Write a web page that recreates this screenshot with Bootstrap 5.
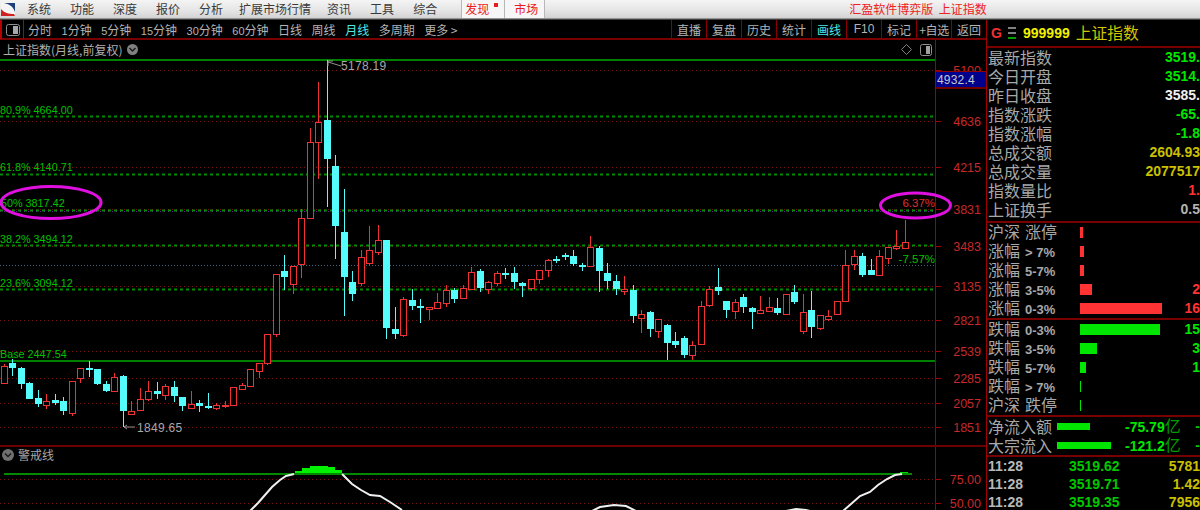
<!DOCTYPE html>
<html lang="zh-CN">
<head>
    <meta charset="UTF-8">
    <title>汇盈软件博弈版 上证指数</title>
    <link href="https://cdn.jsdelivr.net/npm/bootstrap@5.3.0/dist/css/bootstrap.min.css" rel="stylesheet">
    <style>
        html, body { background: #000; margin: 0; height: 510px; overflow: hidden; }
        body, svg text { font-family: "Liberation Sans", "Noto Sans CJK SC", sans-serif; }
        .cjk { font-family: "Noto Sans CJK SC", sans-serif; }

        .menu-bar { height: 20px; font-size: 12px; line-height: 18px; color: #3a3a3a;
            background: linear-gradient(#f4f4f4 0, #e6e6e6 50%, #d4d4d4 88%, #707070 95%, #101010 100%); }
        .menu-logo { width: 27px; }
        .menu-item { margin-right: 19px; }
        .menu-item.tight { margin-right: 16px; }
        .menu-tab { color: #e81c1c; background: #f6f6f6; border-left: 1px solid #b8b8b8; height: 18px; }
        .tab-find { width: 43px; margin-left: 1px; padding-left: 3px; position: relative; }
        .tab-find i { position: absolute; left: 32px; top: 3px; width: 4px; height: 4px; background: #e81c1c; }
        .tab-market { width: 41px; padding-left: 9px; border-right: 1px solid #b8b8b8; }
        .app-title { color: #ee2222; margin-left: 304px; white-space: pre; word-spacing: 3px; }

        .chart-side { width: 986px; }
        .tool-bar { height: 20px; font-size: 12px; line-height: 19px; color: #b4b4b4; border-bottom: 2px solid #7a0000; }
        .tool-box { width: 24px; height: 19px; border-left: 2px solid #b80000; border-right: 1px solid #b80000; }
        .tool-periods { gap: 9.5px; margin-left: 4px; }
        .tool-num { font-size: 11px; }
        .tool-on { color: #4ce8e8; }
        .tool-cell { width: 35px; height: 18px; border-left: 1px solid #8a0000; text-align: center; }
        .tool-wide { font-size: 12px; letter-spacing: -.4px; }

        .sub-bar { height: 19px; font-size: 12px; line-height: 19px; color: #b0b0b0; padding-left: 3px; }
        .sub-arrow { margin-left: 5px; }
        .sub-axis { width: 51px; height: 19px; margin-left: 3px; border-left: 1px solid #a00000; }
        .chart-svg { display: block; }

        .quote-side { width: 214px; border-left: 1px solid #a00000; overflow: hidden; height: 490px; }
        .quote-head { height: 28px; border-bottom: 2px solid #7a0000; padding-left: 4px; line-height: 26px; }
        .q-g { color: #f03030; font-weight: bold; font-size: 14px; width: 17px; }
        .q-code { color: #f0f000; font-weight: bold; font-size: 14px; margin-left: 7px; }
        .q-name { color: #d0c800; font-size: 15.75px; margin-left: 6px; }
        .q-rows { border-bottom: 2px solid #7a0000; padding-bottom: 2px; }
        .q-row { height: 19px; line-height: 19px; padding-left: 1px; font-weight: bold; font-size: 14px; white-space: nowrap; }
        .q-label { font-weight: normal; font-size: 16px; color: #a8a8a8; }
        .q-mini { font-weight: bold; font-size: 13px; color: #a8a8a8; margin-left: 5px; }
        .q-gap { margin-left: 5px; }
        .q-bar-cell { width: 92px; flex: none; }
        .q-bar { height: 11px; }
        .q-bar.up { background: #ff3333; }
        .q-bar.dn { background: #00e600; }
        .q-flow-cell { width: 69px; flex: none; }
        .q-flow { width: 68px; flex: none; }
        .q-flow .q-bar { height: 7px; }
        .q-sep { border-bottom: 2px solid #7a0000; }
        .q-yi { font-weight: normal; font-size: 16px; color: #00a000; }
        .q-green { color: #00e600; }
        .q-dgreen { color: #00c800; }
        .q-white { color: #f0f0f0; }
        .q-gray { color: #b4b4b4; }
        .q-olive { color: #c8c000; }
        .q-red { color: #ff3333; }
        .tape-row { height: 18px; line-height: 18px; padding-left: 1px; font-weight: bold; font-size: 14px; white-space: nowrap; }
        .tape-time { width: 81px; flex: none; color: #b8b8b8; }
    </style>
</head>
<body>
    <div class="menu-bar d-flex">
        <div class="menu-logo flex-shrink-0">
            <svg width="16" height="14" viewBox="0 0 16 14">
                <rect x="1" width="14" height="13" fill="#f4f4f4"/>
                <path d="M4 0h11v9C13 3 9 1 4 0z" fill="#1c3f7c"/>
                <path d="M1 6c3 4 8 5 13 5l1 2H1z" fill="#d02020"/>
            </svg>
        </div>
        <span class="menu-item cjk">系统</span>
        <span class="menu-item cjk">功能</span>
        <span class="menu-item cjk">深度</span>
        <span class="menu-item cjk">报价</span>
        <span class="menu-item tight cjk">分析</span>
        <span class="menu-item tight cjk">扩展市场行情</span>
        <span class="menu-item cjk">资讯</span>
        <span class="menu-item cjk">工具</span>
        <span class="cjk">综合</span>
        <span class="menu-tab tab-find cjk ms-4">发现<i></i></span>
        <span class="menu-tab tab-market cjk">市场</span>
        <span class="app-title cjk">汇盈软件博弈版 上证指数</span>
    </div>

    <div class="d-flex">
        <div class="chart-side flex-shrink-0">
            <div class="tool-bar d-flex">
                <div class="tool-box d-flex align-items-center justify-content-center">
                    <svg width="14" height="12" viewBox="0 0 14 12">
                        <rect x=".5" y=".5" width="13" height="11" rx="2" fill="none" stroke="#909090"/>
                        <rect x="7" y="2" width="5" height="8" fill="#a8a8a8"/>
                    </svg>
                </div>
                <div class="tool-periods d-flex">
                    <span class="cjk">分时</span>
                    <span><span class="tool-num">1</span><span class="cjk">分钟</span></span>
                    <span><span class="tool-num">5</span><span class="cjk">分钟</span></span>
                    <span><span class="tool-num">15</span><span class="cjk">分钟</span></span>
                    <span><span class="tool-num">30</span><span class="cjk">分钟</span></span>
                    <span><span class="tool-num">60</span><span class="cjk">分钟</span></span>
                    <span class="cjk">日线</span>
                    <span class="cjk">周线</span>
                    <span class="cjk tool-on">月线</span>
                    <span class="cjk">多周期</span>
                    <span class="cjk">更多 &gt;</span>
                </div>
                <div class="d-flex ms-auto">
                    <span class="tool-cell cjk">直播</span>
                    <span class="tool-cell cjk">复盘</span>
                    <span class="tool-cell cjk">历史</span>
                    <span class="tool-cell cjk">统计</span>
                    <span class="tool-cell cjk tool-on">画线</span>
                    <span class="tool-cell">F10</span>
                    <span class="tool-cell cjk">标记</span>
                    <span class="tool-cell cjk tool-wide">+自选</span>
                    <span class="tool-cell cjk">返回</span>
                </div>
            </div>
            <div class="sub-bar d-flex">
                <span class="cjk">上证指数(月线,前复权)</span>
                <span class="sub-arrow d-flex align-items-center">
                    <svg width="11" height="11" viewBox="0 0 11 11">
                        <circle cx="5.5" cy="5.5" r="5.5" fill="#808080"/>
                        <path d="M2.5 4l3 3 3-3" fill="none" stroke="#1a1a1a" stroke-width="1.5"/>
                    </svg>
                </span>
                <span class="d-flex align-items-center gap-2 ms-auto">
                    <svg width="11" height="11" viewBox="0 0 11 11"><path d="M5.5 .5l5 5-5 5-5-5z" fill="none" stroke="#808080"/></svg>
                    <svg width="12" height="12" viewBox="0 0 12 12">
                        <rect x=".5" y=".5" width="11" height="11" rx="2" fill="none" stroke="#909090"/>
                        <rect x="6" y="2" width="4" height="8" fill="#a0a0a0"/>
                    </svg>
                </span>
                <span class="sub-axis"></span>
            </div>
            <svg id="chart" class="chart-svg" width="986" height="451" viewBox="0 59 986 451"></svg>
        </div>

        <div class="quote-side flex-shrink-0">
            <div class="quote-head d-flex align-items-center">
                <span class="q-g">G</span>
                <svg width="8" height="14" viewBox="0 0 8 14">
                    <rect y="1" width="8" height="2" fill="#808080"/>
                    <rect y="6" width="8" height="2" fill="#808080"/>
                    <rect y="11" width="8" height="2" fill="#00a000"/>
                </svg>
                <span class="q-code">999999</span>
                <span class="q-name cjk">上证指数</span>
            </div>
            <div class="q-rows" id="summary"></div>
            <div class="q-sep" id="ups"></div>
            <div class="q-sep pb-0" id="downs"></div>
            <div class="q-sep" id="flows"></div>
            <div id="tape"></div>
        </div>
    </div>

    <script src="https://cdn.jsdelivr.net/npm/bootstrap@5.3.0/dist/js/bootstrap.bundle.min.js"></script>
    <script>
        // [type, wick top, body top, body bottom, wick bottom], type 1 = red hollow, 0 = cyan filled
        const candles = [
            [1,364,366,383,383],[0,359,363,368,376],[0,367,368,384,389],[0,382,383,399,399],[0,390,398,404,407],
            [1,394,401,405,409],[0,394,400,403,405],[0,397,401,411,415],[1,381,381,413,416],[1,368,368,378,383],
            [0,361,368,370,377],[0,369,369,384,385],[0,381,384,391,392],[1,373,377,391,391],[0,375,376,411,427],
            [1,401,411,414,415],[1,388,399,410,410],[1,381,391,399,401],[0,382,391,394,399],[1,384,386,395,400],
            [0,381,387,396,402],[0,397,397,406,411],[1,391,404,408,408],[0,400,403,406,412],[0,393,406,408,409],
            [1,403,405,408,410],[1,401,405,406,408],[1,387,387,405,406],[1,383,385,389,389],[1,369,369,386,386],
            [1,363,363,371,378],[1,334,334,363,365],[1,274,274,334,337],[0,255,271,277,290],[1,266,266,284,294],
            [1,209,218,264,278],[1,128,142,218,218],[1,82,122,142,179],[0,60,120,159,207],[0,155,166,226,259],
            [0,189,232,277,316],[0,271,282,294,301],[1,250,257,283,286],[1,226,250,263,266],[1,225,240,252,255],
            [0,240,240,328,339],[0,307,329,334,339],[1,297,299,335,337],[0,289,300,306,310],[0,299,306,308,323],
            [1,307,307,309,320],[1,293,302,308,308],[1,285,290,303,307],[0,288,290,299,303],[1,285,288,298,298],
            [1,267,272,289,289],[0,269,271,288,292],[1,281,282,289,294],[1,271,273,283,286],[0,268,273,275,279],
            [0,267,273,282,289],[0,282,283,286,297],[1,279,279,288,291],[1,270,270,279,284],[1,259,260,270,277],
            [0,256,259,261,263],[0,253,255,256,260],[0,250,256,264,266],[0,263,265,266,271],[1,236,247,266,266],
            [0,246,248,271,292],[0,263,273,281,289],[0,275,281,289,295],[1,276,289,291,295],[0,285,290,316,323],
            [1,310,314,318,333],[0,311,312,329,337],[1,319,319,331,338],[0,324,325,343,360],[0,332,341,345,348],
            [0,336,338,355,358],[1,341,345,355,360],[1,301,306,344,344],[1,286,289,305,307],[0,268,287,291,295],
            [0,301,301,310,318],[1,299,302,311,319],[0,294,297,307,313],[0,307,308,312,329],[1,296,310,313,313],
            [1,297,307,311,311],[0,298,308,313,315],[1,294,294,314,315],[0,285,292,302,304],[1,294,312,331,334],
            [0,291,310,327,338],[1,315,315,328,330],[1,310,316,319,321],[1,301,301,314,314],[1,250,265,301,301],
            [1,250,256,264,270],[0,253,256,275,277],[0,259,270,275,275],[1,250,256,275,276],[1,247,247,258,264],
            [1,230,246,248,250],[1,220,242,248,248]
        ];
        const axisRight = 935;
        let svg = '';

        // dotted grid and axis labels
        const gridY = [[70,'5100'],[121,'4636'],[167,'4215'],[209,'3831'],[246,'3483'],[286,'3135'],[320,'2821'],[351,'2539'],[378,'2285'],[403,'2057'],[427,'1851'],[479,'75.00'],[503,'50.00']];
        for (const [y, label] of gridY) {
            svg += `<line x1="0" x2="${axisRight}" y1="${y+.5}" y2="${y+.5}" stroke="#7c1010" stroke-dasharray="1 3"/>`;
            svg += `<rect x="936" y="${y}" width="5" height="1" fill="#a00000"/>`;
            svg += `<text x="981" y="${y+5}" text-anchor="end" font-size="12.5" fill="#c82828">${label}</text>`;
        }
        svg += `<line x1="0" x2="${axisRight}" y1="211.5" y2="211.5" stroke="#7a10a0" stroke-dasharray="1 3"/>`;
        svg += `<line x1="0" x2="${axisRight}" y1="265.5" y2="265.5" stroke="#3c6488" stroke-dasharray="1 2"/>`;

        // fibonacci levels
        for (const y of [116, 174, 210, 245, 289]) {
            svg += `<line x1="0" x2="${axisRight}" y1="${y+.5}" y2="${y+.5}" stroke="#008c00" stroke-width="2" stroke-dasharray="3 3"/>`;
        }
        svg += `<rect x="0" y="59" width="${axisRight}" height="2" fill="#008000"/>`;
        svg += `<rect x="0" y="360" width="${axisRight}" height="2" fill="#008000"/>`;
        const fibLabels = [[0,114,'80.9% 4664.00'],[0,171,'61.8% 4140.71'],[1,207,'50% 3817.42'],[0,243,'38.2% 3494.12'],[0,287,'23.6% 3094.12'],[0,358,'Base 2447.54']];
        for (const [x, y, t] of fibLabels) {
            svg += `<text x="${x}" y="${y}" font-size="10.8" fill="#00c000">${t}</text>`;
        }

        // candles
        candles.forEach(([up, top, bt, bb, bottom], i) => {
            const cx = Math.floor(4.4 + 8.5 * i) + .5;
            const color = up ? '#f03232' : '#54fcfc';
            let g = `<line x1="${cx}" x2="${cx}" y1="${top}" y2="${bottom}" stroke="${color}"/>`;
            if (up) {
                g += `<rect x="${cx-3}" y="${bt+.5}" width="6" height="${Math.max(bb-bt,1)}" fill="#000" stroke="${color}"/>`;
            } else {
                g += `<rect x="${cx-3.5}" y="${bt}" width="7" height="${Math.max(bb-bt,2)}" fill="${color}"/>`;
            }
            svg += g;
        });

        // high / low markers
        svg += `<path d="M328 62l13 4" stroke="#909090" fill="none"/><path d="M328 61v5M328 61h5" stroke="#909090" fill="none"/>`;
        svg += `<text x="341" y="70" font-size="12" letter-spacing=".3" fill="#a8a8a8">5178.19</text>`;
        svg += `<path d="M124 427h11M124 427l3-2M124 427l3 2" stroke="#909090" fill="none"/>`;
        svg += `<text x="137" y="432" font-size="12" letter-spacing=".3" fill="#a8a8a8">1849.65</text>`;
        svg += `<text x="935" y="207" text-anchor="end" font-size="11.5" fill="#e02c2c">6.37%</text>`;
        svg += `<text x="935" y="263" text-anchor="end" font-size="11.5" fill="#00c000">-7.57%</text>`;

        // axis line, price tag
        svg += `<rect x="935" y="59" width="1" height="451" fill="#a00000"/>`;
        svg += `<rect x="936" y="71" width="50" height="17" fill="#00008c"/><rect x="936" y="71" width="50" height="1" fill="#900000"/><rect x="936" y="87" width="50" height="2" fill="#700000"/>`;
        svg += `<text x="937" y="84" font-size="12" letter-spacing=".2" fill="#c8c8c8">4932.4</text>`;

        // lower panel
        svg += `<rect x="0" y="445" width="986" height="2" fill="#6c0000"/>`;
        svg += `<circle cx="8" cy="455" r="6" fill="#707070"/><path d="M5 453.500l3 3 3-3" fill="none" stroke="#1a1a1a" stroke-width="1.5"/>`;
        svg += `<text x="18" y="460" font-size="12" fill="#a8a8a8" class="cjk">警戒线</text>`;
        svg += `<path d="M295 474V471H302V468H310V466H328V467H335V470H342V474Z" fill="#00f000"/>`;
        svg += `<path d="M900 474V472H908V473H912V474Z" fill="#00e000"/>`;
        svg += `<rect x="4" y="473" width="908" height="2" fill="#008800"/>`;
        const white = 'fill="none" stroke="#f0f0f0" stroke-width="2"';
        svg += `<path d="M250 511L258 503L265 495L272 487L280 480L286 476L294 474" ${white}/>`;
        svg += `<path d="M342 474L352 484L361 490L370 495L380 496L390 502L402 510" ${white}/>`;
        svg += `<path d="M592 511L600 507L614 505L626 506L636 511" ${white}/>`;
        svg += `<path d="M786 511L796 509L806 510L810 511" ${white}/>`;
        svg += `<path d="M843 511L851 504L860 496L870 492L878 485L887 479L895 475L902 474" ${white}/>`;

        // marker ellipses
        svg += `<ellipse cx="51" cy="202.500" rx="50" ry="16" fill="none" stroke="#e010e0" stroke-width="3"/>`;
        svg += `<ellipse cx="915.500" cy="205.500" rx="35" ry="12.5" fill="none" stroke="#e010e0" stroke-width="3"/>`;
        document.getElementById('chart').innerHTML = svg;

        // quote panel
        const summary = [['最新指数','3519.','q-green'],['今日开盘','3514.','q-green'],['昨日收盘','3585.','q-white'],['指数涨跌','-65.','q-green'],['指数涨幅','-1.8','q-green'],['总成交额','2604.93','q-olive'],['总成交量','2077517','q-olive'],['指数量比','1.','q-red'],['上证换手','0.5','q-gray']];
        document.getElementById('summary').innerHTML = summary.map(([l, v, c]) =>
            `<div class="q-row d-flex justify-content-between"><span class="q-label cjk">${l}</span><span class="${c}">${v}</span></div>`).join('');

        const barRow = (a, b, w, cls, val) => {
            const second = b.endsWith('停') ? `<span class="q-label q-gap cjk">${b}</span>` : `<span class="q-mini">${b}</span>`;
            return `<div class="q-row d-flex align-items-center">
            <span class="q-bar-cell"><span class="q-label cjk">${a}</span>${second}</span>
            <div class="q-bar ${cls}" style="width:${w}px"></div>
            <span class="ms-auto ${cls == 'up' ? 'q-red' : 'q-green'}">${val}</span></div>`;
        };
        document.getElementById('ups').innerHTML = [['沪深','涨停',3,''],['涨幅','&gt; 7%',4,''],['涨幅','5-7%',4,''],['涨幅','3-5%',12,'2'],['涨幅','0-3%',82,'16']]
            .map(r => barRow(r[0], r[1], r[2], 'up', r[3])).join('');
        document.getElementById('downs').innerHTML = [['跌幅','0-3%',80,'15'],['跌幅','3-5%',17,'3'],['跌幅','5-7%',6,'1'],['跌幅','&gt; 7%',1,''],['沪深','跌停',1,'']]
            .map(r => barRow(r[0], r[1], r[2], 'dn', r[3])).join('');

        document.getElementById('flows').innerHTML = [['净流入额',33,'-75.79'],['大宗流入',54,'-121.2']].map(([l, w, v]) =>
            `<div class="q-row d-flex align-items-center">
                <span class="q-flow-cell q-label cjk">${l}</span>
                <div class="q-flow"><div class="q-bar dn" style="width:${w}px"></div></div>
                <span class="q-green">${v}<span class="q-yi cjk">亿</span></span>
                <span class="ms-auto q-dgreen">-</span></div>`).join('');

        document.getElementById('tape').innerHTML = [['11:28','3519.62','5781'],['11:28','3519.71','1.42'],['11:28','3519.35','7956']].map(([t, p, v]) =>
            `<div class="tape-row d-flex"><span class="tape-time">${t}</span><span class="q-dgreen">${p}</span><span class="ms-auto q-olive">${v}</span></div>`).join('');
    </script>
</body>
</html>
